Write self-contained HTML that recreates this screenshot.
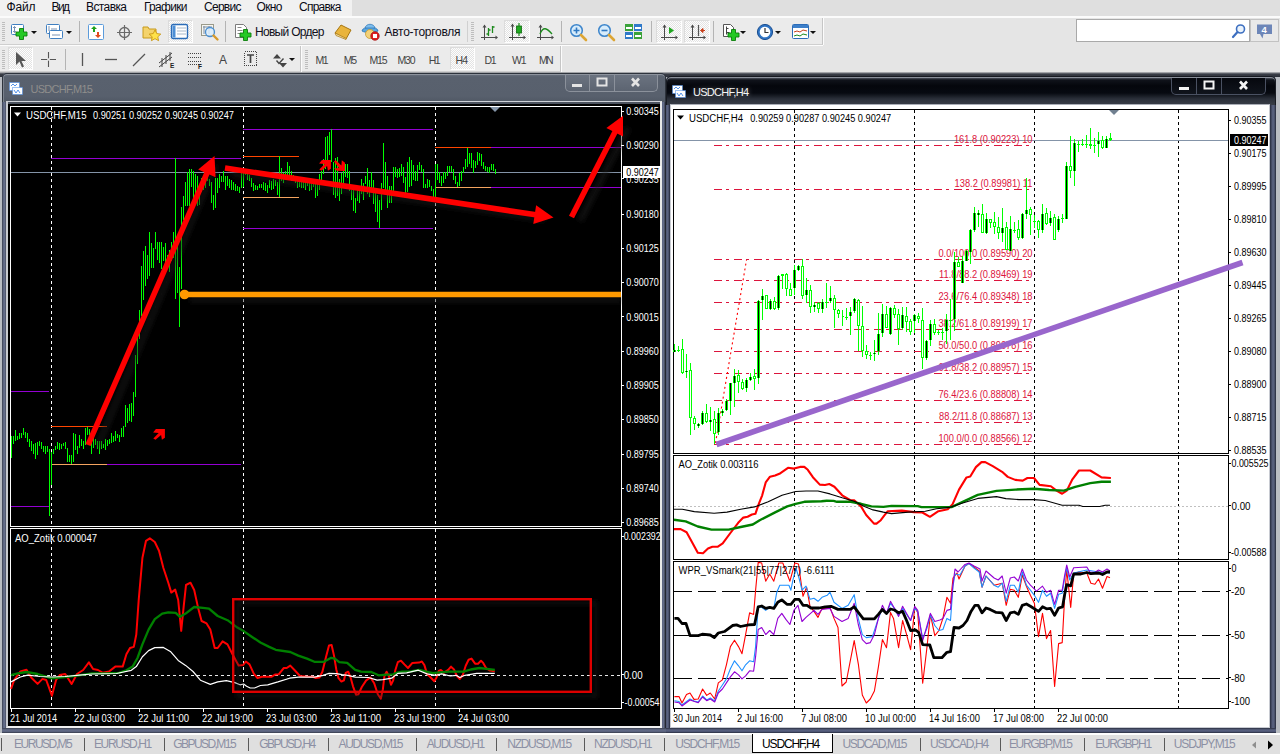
<!DOCTYPE html>
<html lang="ru"><head><meta charset="utf-8"><title>MetaTrader 4 - USDCHF,H4</title>
<style>
*{box-sizing:border-box;margin:0;padding:0}
html,body{width:1280px;height:754px;overflow:hidden;background:#ababab;font-family:"Liberation Sans",sans-serif;font-size:12px;color:#000}
#app{position:relative;width:1280px;height:754px;overflow:hidden;background:#b9bdc3}
.abs{position:absolute}
#menubar{position:absolute;left:0;top:0;width:1280px;height:18px;background:#dfdfdf;border-bottom:2px solid #fbfbfb}
#menubar span{position:absolute;top:0px;font-size:12px;line-height:15px;color:#0a0a14;white-space:nowrap}
#menubar .hl{position:absolute;left:0;top:0;width:352px;height:16px;background:#f1f1f1}
#tb1{position:absolute;left:0;top:18px;width:1280px;height:28px;background:#e5e5e5}
#tb2{position:absolute;left:0;top:46px;width:1280px;height:27px;background:#e5e5e5}
.tbseg{position:absolute;top:0;height:27px;background:#ebebeb;border-right:1px solid #c6c6c6;border-bottom:1px solid #cfcfcf;box-shadow:0 1px 0 #fcfcfc,1px 0 0 #fcfcfc}
.grip{position:absolute;width:3px;top:4px;height:19px;background:repeating-linear-gradient(#bdbdbd 0 1px,transparent 1px 2px)}
.sep{position:absolute;width:1px;top:3px;height:21px;background:#b4b4b4}
.ic{position:absolute;overflow:visible}
.pressed{position:absolute;background:repeating-conic-gradient(#fdfdfd 0 25%,#e3e3e3 0 50%) 0 0/2px 2px;border:1px solid #dcdcdc;border-right-color:#fff;border-bottom-color:#fff}
.tbtxt{position:absolute;font-size:12px;line-height:14px;color:#10101c;white-space:nowrap}
.tf{position:absolute;top:6.500px;font-size:10.500px;line-height:14px;color:#444;white-space:nowrap}
.dd{position:absolute;width:0;height:0;border-left:3px solid transparent;border-right:3px solid transparent;border-top:3px solid #111}
#search{position:absolute;left:1076px;top:19px;width:174px;height:23px;background:#fff;border:1px solid #a9a9a9}
#chat{position:absolute;left:1250px;top:19px;width:29px;height:23px;background:#e9e9e9;border:1px solid #c2c2c2}
/* MDI windows */
.win{position:absolute;border-radius:5px 5px 0 0}
.wtitle{position:absolute;left:0;top:0;right:0;height:29px;border-radius:5px 5px 0 0}
.wtxt{position:absolute;font-size:11px;line-height:14px;white-space:nowrap}
.wbtns{position:absolute;height:17px;border-radius:0 0 5px 5px}
.wbtns i{position:absolute;top:0;height:16px;width:1px}
#tabs{position:absolute;left:0;top:733px;width:1280px;height:21px;background:#dfdfdf;border-top:2px solid #fdfdfd}
#tabs span{position:absolute;top:2px;font-size:12px;line-height:15px;color:#8c90a4;white-space:nowrap}
#tabs i{position:absolute;top:3px;width:1px;height:13px;background:#5a5a5a}
#tabs .act{position:absolute;left:752px;top:-1px;width:81px;height:19px;background:#fff;border:1px solid #000;border-top:none}
svg text{font-family:"Liberation Sans",sans-serif}
</style></head>
<body><div id="app">
<div id="menubar"><div class="hl"></div><span style="left:6.5px;letter-spacing:-0.172px">Файл</span><span style="left:51.5px;letter-spacing:-1.609px">Вид</span><span style="left:86px;letter-spacing:-0.602px">Вставка</span><span style="left:144px;letter-spacing:-0.701px">Графики</span><span style="left:204px;letter-spacing:-0.719px">Сервис</span><span style="left:256.5px;letter-spacing:-0.63px">Окно</span><span style="left:299px;letter-spacing:-0.763px">Справка</span></div>
<div id="tb1"><div class="tbseg" style="left:0;width:823px"></div><div class="grip" style="left:2px"></div><svg class="ic" style="left:10px;top:5px" width="20" height="19" viewBox="0 0 20 19"><rect x="1.500" y="1.500" width="12" height="10" rx="1" fill="#fff" stroke="#3f7fc1"/><path d="M4.500 3.500v6M3 5l1.500-1.500 1.500 1.500M3 8l1.500 1.500 1.500-1.500" stroke="#7a93b3" fill="none"/><path d="M9.500 5.500h4v3.500h3.500v4h-3.500v3.500h-4v-3.500h-3.500v-4h3.500z" fill="#25c925" stroke="#0b7e0b" stroke-width=".9"/></svg><div class="dd" style="left:31px;top:13px"></div><svg class="ic" style="left:45px;top:5px" width="20" height="18" viewBox="0 0 20 18"><rect x="1.500" y="1.500" width="13" height="9" rx="1" fill="#fff" stroke="#3f7fc1"/><rect x="4.500" y="7.500" width="13" height="8" rx="1" fill="#fff" stroke="#3f7fc1"/><path d="M4 3v5M6 6h6M7 12h8" stroke="#7a93b3" fill="none"/></svg><div class="dd" style="left:66px;top:13px"></div><div class="sep" style="left:79px"></div><svg class="ic" style="left:88px;top:6px" width="16" height="16" viewBox="0 0 16 16"><rect x="0.500" y="0.500" width="15" height="15" rx="1" fill="#fff" stroke="#5b9bdb"/><path d="M6 2l3 3h-2v3h-2v-3h-2z" fill="#1da11d"/><path d="M10 14l-3-3h2v-3h2v3h2z" fill="#e24a1c"/></svg><svg class="ic" style="left:116px;top:6px" width="17" height="17" viewBox="0 0 17 17"><circle cx="8.500" cy="8.500" r="5" fill="none" stroke="#6a6a6a" stroke-width="1.300"/><path d="M8.500 1v15M1 8.500h15" stroke="#6a6a6a" stroke-width="1.200"/></svg><svg class="ic" style="left:142px;top:5px" width="20" height="18" viewBox="0 0 20 18"><path d="M1 4h5l1 2h7v9h-13z" fill="#f4d36b" stroke="#c79a1c"/><path d="M13 7l1.800 3.600 4 .5-3 2.700.8 3.900-3.600-2-3.600 2 .8-3.900-3-2.700 4-.5z" fill="#ffe24a" stroke="#c48f0a" stroke-width=".8"/></svg><div class="pressed" style="left:168px;top:2px;width:25px;height:23px"></div><svg class="ic" style="left:171px;top:6px" width="17" height="16" viewBox="0 0 17 16"><rect x="0.500" y="0.500" width="16" height="14" rx="1.500" fill="#fff" stroke="#2b6cb8" stroke-width="1.400"/><rect x="1.500" y="1.500" width="3" height="12" fill="#4d8fd6"/><path d="M6 4h9M6 7h9M6 10h9" stroke="#a9b8c9"/></svg><svg class="ic" style="left:200px;top:5px" width="20" height="18" viewBox="0 0 20 18"><rect x="1.500" y="1.500" width="12" height="11" fill="#f5f5f0" stroke="#9a9a8a"/><path d="M3 4h9M4 3v8M9 3v8" stroke="#7c8da3" fill="none"/><circle cx="10" cy="9" r="4.500" fill="#d9ecfb" fill-opacity=".85" stroke="#4b8fd0" stroke-width="1.300"/><path d="M13.500 12.500l4 4" stroke="#d79a2b" stroke-width="2.400" stroke-linecap="round"/></svg><div class="sep" style="left:225px"></div><svg class="ic" style="left:234px;top:5px" width="20" height="19" viewBox="0 0 20 19"><path d="M1.500 1.500h8l3 3v10h-11z" fill="#fff" stroke="#7b7b7b"/><path d="M3.500 4.500h4M3.500 7.500h5M3.500 10.500h3" stroke="#8a8a8a"/><path d="M9.500 6.500h4v3.500h3.500v4h-3.500v3.500h-4v-3.500h-3.500v-4h3.500z" fill="#25c925" stroke="#0b7e0b" stroke-width=".9"/></svg><span class="tbtxt" style="left:255px;top:7px;letter-spacing:-0.697px">Новый Ордер</span><svg class="ic" style="left:333px;top:6px" width="20" height="16" viewBox="0 0 20 16"><path d="M2 9l6-8 10 5-5 9z" fill="#e9b43c" stroke="#a77611"/><path d="M2 9l1 2.500 10 4 .3-1z" fill="#f7e3a3" stroke="#a77611" stroke-width=".7"/></svg><svg class="ic" style="left:361px;top:5px" width="20" height="18" viewBox="0 0 20 18"><path d="M1 8c0-5 16-5 16 0c-3 2-13 2-16 0z" fill="#5aa6e0" stroke="#2a73b6" stroke-width=".8"/><path d="M4 5c1-5 9-5 10 0z" fill="#7cbcec" stroke="#2a73b6" stroke-width=".7"/><circle cx="9" cy="11" r="4.500" fill="#f3d27a" stroke="#c99a2d" stroke-width=".8"/><circle cx="14" cy="13" r="4.200" fill="#e02020" stroke="#a50f0f" stroke-width=".8"/><rect x="12" y="11" width="4" height="4" fill="#fff"/></svg><span class="tbtxt" style="left:384.5px;top:7px;letter-spacing:-0.271px">Авто-торговля</span><div class="sep" style="left:467px;background:#d0d0d0"></div><div class="grip" style="left:471px"></div><svg class="ic" style="left:481px;top:6px" width="18" height="16" viewBox="0 0 18 16"><path d="M3.500 1v15M0 13.500h16" stroke="#4a4a4a" stroke-width="1" fill="none" shape-rendering="crispEdges"/><path d="M14.500 11.500l2.500 2-2.500 2zM1.500 3.500l2-3 2 3z" fill="#4a4a4a"/><path d="M7.500 4v8M5.500 10h2M7.500 6h2M11.500 2v7M11.500 3h2" stroke="#1d8a1d" stroke-width="1.300" fill="none"/></svg><div class="pressed" style="left:504px;top:2px;width:26px;height:23px"></div><svg class="ic" style="left:509px;top:5px" width="18" height="18" viewBox="0 0 18 18"><path d="M3.500 1v16M0 14.500h16" stroke="#4a4a4a" stroke-width="1" fill="none" shape-rendering="crispEdges"/><path d="M14.500 12.500l2.500 2-2.500 2zM1.500 3.500l2-3 2 3z" fill="#4a4a4a"/><path d="M10 0v13" stroke="#1d8a1d" stroke-width="1.200"/><rect x="7.500" y="3" width="5" height="7" fill="#21a821" stroke="#0d6d0d" stroke-width=".8"/></svg><svg class="ic" style="left:537px;top:6px" width="18" height="16" viewBox="0 0 18 16"><path d="M3.500 1v15M0 13.500h16" stroke="#4a4a4a" stroke-width="1" fill="none" shape-rendering="crispEdges"/><path d="M14.500 11.500l2.500 2-2.500 2zM1.500 3.500l2-3 2 3z" fill="#4a4a4a"/><path d="M3 10c3-8 7-6 12 0" stroke="#1d8a1d" stroke-width="1.300" fill="none"/></svg><div class="sep" style="left:561px"></div><svg class="ic" style="left:569px;top:5px" width="20" height="19" viewBox="0 0 20 19"><circle cx="7.500" cy="7.500" r="5.800" fill="#d7ecfb" stroke="#3d85cb" stroke-width="1.500"/><path d="M4.500 7.500h6M7.500 4.500v6" stroke="#2f78c2" stroke-width="1.600"/><path d="M12 12l5 5" stroke="#dca534" stroke-width="2.600" stroke-linecap="round"/></svg><svg class="ic" style="left:597px;top:5px" width="20" height="19" viewBox="0 0 20 19"><circle cx="7.500" cy="7.500" r="5.800" fill="#d7ecfb" stroke="#3d85cb" stroke-width="1.500"/><path d="M4.500 7.500h6" stroke="#2f78c2" stroke-width="1.600"/><path d="M12 12l5 5" stroke="#dca534" stroke-width="2.600" stroke-linecap="round"/></svg><svg class="ic" style="left:625px;top:6px" width="18" height="16" viewBox="0 0 18 16"><rect x="0" y="0" width="8" height="7" fill="#3aa23a"/><rect x="9" y="0" width="8" height="7" fill="#2f79c9"/><rect x="0" y="8" width="8" height="7" fill="#2f79c9"/><rect x="9" y="8" width="8" height="7" fill="#3aa23a"/><path d="M1 4h6M10 4h6M1 12h6M10 12h6" stroke="#fff" stroke-width="2"/></svg><div class="sep" style="left:651px"></div><div class="pressed" style="left:656px;top:2px;width:26px;height:23px"></div><svg class="ic" style="left:661px;top:6px" width="18" height="16" viewBox="0 0 18 16"><path d="M3.500 1v15M0 13.500h16" stroke="#4a4a4a" stroke-width="1" fill="none" shape-rendering="crispEdges"/><path d="M14.500 11.500l2.500 2-2.500 2zM1.500 3.500l2-3 2 3z" fill="#4a4a4a"/><path d="M8 3l5 3.500-5 3.500z" fill="#1fa51f"/></svg><div class="pressed" style="left:684px;top:2px;width:26px;height:23px"></div><svg class="ic" style="left:689px;top:6px" width="18" height="16" viewBox="0 0 18 16"><path d="M3.500 1v15M0 13.500h16" stroke="#4a4a4a" stroke-width="1" fill="none" shape-rendering="crispEdges"/><path d="M14.500 11.500l2.500 2-2.500 2zM1.500 3.500l2-3 2 3z" fill="#4a4a4a"/><path d="M9.500 1v11" stroke="#555" stroke-width="1.200"/><path d="M16 6.500h-4M14 4.500l-2.500 2 2.500 2z" stroke="#c8401c" fill="#c8401c" stroke-width="1"/></svg><div class="sep" style="left:713px"></div><svg class="ic" style="left:722px;top:5px" width="20" height="19" viewBox="0 0 20 19"><path d="M1.500 1.500h7l3 3v9h-10z" fill="#fff" stroke="#555"/><path d="M4.500 3.500v8M4.500 9.500h3M4.500 5.500h2" stroke="#444" fill="none"/><path d="M9.500 6.500h4v3.500h3.500v4h-3.500v3.500h-4v-3.500h-3.500v-4h3.500z" fill="#25c925" stroke="#0b7e0b" stroke-width=".9"/></svg><div class="dd" style="left:740px;top:13px"></div><svg class="ic" style="left:756px;top:5px" width="18" height="18" viewBox="0 0 18 18"><circle cx="9" cy="9" r="7.600" fill="#2f74c4" stroke="#1c4f91"/><circle cx="9" cy="9" r="5.300" fill="#fff"/><path d="M9 5v4.500h3.500" stroke="#333" stroke-width="1.200" fill="none"/></svg><div class="dd" style="left:775px;top:13px"></div><svg class="ic" style="left:792px;top:6px" width="18" height="16" viewBox="0 0 18 16"><rect x="0.500" y="0.500" width="16" height="14" rx="1" fill="#fff" stroke="#2b6cb8"/><rect x="1" y="1" width="15" height="3" fill="#3d7fc9"/><path d="M2 8l3-1 3 1 3-2 4 1" stroke="#c8401c" fill="none"/><path d="M2 12l3-1 3 1 3-2 4 1" stroke="#1d8a1d" fill="none"/></svg><div class="dd" style="left:810px;top:13px"></div></div><div id="search"><svg class="ic" style="left:154px;top:3px" width="16" height="16" viewBox="0 0 16 16"><circle cx="9.500" cy="6" r="4" fill="#eaf3fc" stroke="#3d6fc0" stroke-width="1.600"/><path d="M6.500 9l-4.500 5" stroke="#3d6fc0" stroke-width="2.200" stroke-linecap="round"/></svg></div><div id="chat"><svg class="ic" style="left:5px;top:4px" width="18" height="16" viewBox="0 0 18 16"><path d="M1 0.500h15v9.500h-8.500l-1 4.500-2.500-4.500h-3z" fill="#6d86b8"/><text x="5.500" y="8.500" font-size="9.500" font-weight="bold" fill="#fff">4</text></svg></div>
<div id="tb2"><div class="tbseg" style="left:0;width:301px;height:26px"></div><div class="tbseg" style="left:302px;width:259px;height:26px"></div><div class="grip" style="left:2px"></div><div class="pressed" style="left:8px;top:1px;width:25px;height:23px;"></div><svg class="ic" style="left:15px;top:5px" width="12" height="18" viewBox="0 0 12 18"><path d="M1 1v13l3.500-3.500 2.500 6 2-1-2.500-5.500h4.500z" fill="#555"/></svg><svg class="ic" style="left:40px;top:5px" width="18" height="18" viewBox="0 0 18 18"><path d="M8.500 1v15M1 8.500h15" stroke="#555" stroke-width="1.100"/><circle cx="8.500" cy="8.500" r="1.300" fill="#ebebeb"/></svg><div class="sep" style="left:65px"></div><svg class="ic" style="left:78px;top:5px" width="10" height="18" viewBox="0 0 10 18"><path d="M4.500 2v13" stroke="#555" stroke-width="1.300"/></svg><svg class="ic" style="left:104px;top:5px" width="16" height="18" viewBox="0 0 16 18"><path d="M1 8.500h12" stroke="#555" stroke-width="1.300"/></svg><svg class="ic" style="left:131px;top:5px" width="16" height="18" viewBox="0 0 16 18"><path d="M2 15l12-12" stroke="#555" stroke-width="1.300"/></svg><svg class="ic" style="left:158px;top:4px" width="20" height="20" viewBox="0 0 20 20"><path d="M1 13l13-10M1 17l13-10M4 8v9M8 5v9M12 2v9" stroke="#444" stroke-width="1" fill="none"/><text x="12" y="18" font-size="6.500" font-weight="bold" fill="#222">E</text></svg><svg class="ic" style="left:187px;top:4px" width="20" height="20" viewBox="0 0 20 20"><path d="M1 3.500h13M1 7.500h13M1 11.500h13M1 14.500h13" stroke="#444" stroke-width="1" stroke-dasharray="1 1" fill="none" shape-rendering="crispEdges"/><text x="11" y="18.500" font-size="6.500" font-weight="bold" fill="#222">F</text></svg><svg class="ic" style="left:218.5px;top:6.5px" width="12" height="16" viewBox="0 0 12 16"><text x="0" y="11" font-size="12" fill="#444">A</text></svg><svg class="ic" style="left:243px;top:4px" width="16" height="18" viewBox="0 0 16 18"><rect x="1.500" y="1.500" width="12" height="14" fill="none" stroke="#444" stroke-dasharray="1 1" shape-rendering="crispEdges"/><path d="M4 5h7M7.500 5v8" stroke="#444" stroke-width="1.700"/></svg><svg class="ic" style="left:271.5px;top:6.5px" width="16" height="16" viewBox="0 0 16 16"><path d="M5 1l4 4.500h-8zM11 14.500l-4-4.500h8z" fill="#444"/><path d="M4.500 7.500l2.500 3 4.500-5" stroke="#444" stroke-width="1.400" fill="none"/></svg><div class="dd" style="left:289px;top:12px"></div><div class="grip" style="left:305px"></div><div class="pressed" style="left:450px;top:1px;width:25px;height:23px"></div><span class="tf" style="left:315.5px;letter-spacing:-1.594px">M1</span><span class="tf" style="left:343.7px;letter-spacing:-1.294px">M5</span><span class="tf" style="left:369.5px;letter-spacing:-1.219px">M15</span><span class="tf" style="left:397.5px;letter-spacing:-1.219px">M30</span><span class="tf" style="left:428.7px;letter-spacing:-1.637px">H1</span><span class="tf" style="left:455.5px;letter-spacing:-0.738px">H4</span><span class="tf" style="left:484.4px;letter-spacing:-1.137px">D1</span><span class="tf" style="left:511.9px;letter-spacing:-1.15px">W1</span><span class="tf" style="left:539px;letter-spacing:-1.844px">MN</span></div>
<div class="abs" style="left:0;top:72px;width:1280px;height:5px;background:linear-gradient(#c9c9c9,#7d8087 1px,#3a3e47 2px,#2b2f38 5px)"></div>
<div class="win" style="left:2px;top:73px;width:664px;height:660px;background:linear-gradient(90deg,#2f3442 0,#59627d 1px,#6a7390 3px,#3a4050 4px,#3a4050 659px,#5a6380 660px,#68718d 662px,#2c303c 663px,#1c1f28 664px)"><div class="wtitle" style="background:linear-gradient(#6b7380 0,#59616e 3px,#58606d 22px,#4f5763 29px);border:1px solid #2e343d;border-bottom:none;box-shadow:inset 0 1px 0 #8d939d,inset 1px 0 0 #7b828d"></div><svg class="ic" style="left:6px;top:8px" width="16" height="16" viewBox="0 0 16 16"><rect x="1.500" y="1.500" width="10" height="8" fill="#fff" stroke="#3f86e8" stroke-dasharray="1 1"/><rect x="4.500" y="6.500" width="10" height="7" fill="#fff" stroke="#3f86e8" stroke-dasharray="1 1"/><path d="M3 5l2-2 2 2 2-2M6 9l2 3 2-3 2 3" stroke="#3f86e8" fill="none" stroke-width=".9"/></svg><span class="wtxt" style="left:28.500px;top:9px;color:#8f8e8c;letter-spacing:-0.731px">USDCHF,M15</span><div class="wbtns" style="left:563px;top:2px;width:93px;background:linear-gradient(#6b7380,#5c6471);border:1px solid #8b919b;border-top:none"><i style="left:23px;background:#8b919b"></i><i style="left:48px;background:#8b919b"></i></div><svg class="ic" style="left:563px;top:2px" width="93" height="17"><rect x="7" y="9" width="10" height="3" fill="#e4e4e4"/><rect x="32.500" y="3.500" width="9" height="7" fill="none" stroke="#e4e4e4" stroke-width="2"/><path d="M67 3.500l7 7.500M74 3.500l-7 7.500" stroke="#e4e4e4" stroke-width="2.600"/></svg><div class="abs" style="left:4px;top:28px;width:656px;height:627px;background:#000;border:2px solid #c9cbd0;border-top:1px solid #cdd0d6;border-right-color:#e9e9e9;border-bottom-color:#f1f1f1;box-shadow:inset 0 2px 0 #4c535f"></div><div class="abs" style="left:0;top:655px;width:664px;height:5px;background:linear-gradient(#3a4050,#636c88 2px,#575f7a 4px,#2c303c)"></div></div>
<div class="win" style="left:666px;top:76px;width:610px;height:657px;background:linear-gradient(90deg,#4e5672 0,#5d6684 2px,#3a4058 3px,#23283a 4px,#23283a 604px,#3a4058 605px,#5d6684 607px,#434a63 609px,#1e2230 610px)"><div class="wtitle" style="background:linear-gradient(#666c78 0,#10131b 3px,#04060c 9px,#070a11 16px,#2b303a 22px,#3a3f49 29px);border:1px solid #181b22;border-bottom:none;box-shadow:inset 0 1px 0 #8a8f99"></div><svg class="ic" style="left:5px;top:8px" width="16" height="16" viewBox="0 0 16 16"><rect x="1.500" y="1.500" width="10" height="8" fill="#fff" stroke="#3f86e8" stroke-dasharray="1 1"/><rect x="4.500" y="6.500" width="10" height="7" fill="#fff" stroke="#3f86e8" stroke-dasharray="1 1"/><path d="M3 5l2-2 2 2 2-2M6 9l2 3 2-3 2 3" stroke="#3f86e8" fill="none" stroke-width=".9"/></svg><span class="wtxt" style="left:27px;top:9px;color:#f4f4f4;text-shadow:0 0 5px rgba(255,255,255,.45);letter-spacing:-0.717px">USDCHF,H4</span><div class="wbtns" style="left:505px;top:2px;width:95px;background:linear-gradient(#06080e,#10141c);border:1px solid #4a5162;border-top:none"><i style="left:24px;background:#4a5162"></i><i style="left:49px;background:#4a5162"></i></div><svg class="ic" style="left:505px;top:2px" width="95" height="17"><rect x="8" y="9" width="10" height="3" fill="#f4f4f4"/><rect x="33.500" y="3.500" width="9" height="7" fill="none" stroke="#f4f4f4" stroke-width="2"/><path d="M69 3.500l7 7.500M76 3.500l-7 7.500" stroke="#f4f4f4" stroke-width="2.600"/></svg><div class="abs" style="left:4px;top:28px;width:600px;height:624px;background:#fff;border:1px solid #c8cbd2;border-top-color:#a9adb6"></div><div class="abs" style="left:0;top:652px;width:610px;height:5px;background:linear-gradient(#2a2f40,#5a6382 2px,#4a5270 4px,#1e2230)"></div></div>
<svg class="abs" style="left:0;top:0" width="666" height="734" viewBox="0 0 666 734" shape-rendering="crispEdges">
<rect x="10.500" y="106.500" width="611" height="420" fill="none" stroke="#ffffff"/>
<rect x="10.500" y="528.500" width="611" height="180" fill="none" stroke="#ffffff"/>
<path d="M51.5 107V526M51.5 529V708" stroke="#ffffff" stroke-dasharray="3 3" fill="none"/>
<path d="M243.5 107V526M243.5 529V708" stroke="#ffffff" stroke-dasharray="3 3" fill="none"/>
<path d="M435.5 107V526M435.5 529V708" stroke="#ffffff" stroke-dasharray="3 3" fill="none"/>
<path d="M11 172.500H621" stroke="#8494a8"/>
<path d="M11 391.5H49" stroke="#9400d3"/>
<path d="M11 506.5H49" stroke="#9400d3"/>
<path d="M51 158.5H241" stroke="#9400d3"/>
<path d="M51 426.5H107" stroke="#ff4500"/>
<path d="M51 464.5H107" stroke="#f4a460"/>
<path d="M107 464.5H241" stroke="#9400d3"/>
<path d="M243 129.5H433" stroke="#9400d3"/>
<path d="M243 228.5H433" stroke="#9400d3"/>
<path d="M243 156.5H299" stroke="#ff4500"/>
<path d="M243 197.5H299" stroke="#f4a460"/>
<path d="M435 147.5H491" stroke="#ff4500"/>
<path d="M491 147.5H621" stroke="#9400d3"/>
<path d="M435 187.5H491" stroke="#f4a460"/>
<path d="M491 187.5H621" stroke="#9400d3"/>
<path d="M11.5 436V458M13.5 436V444M15.5 430V441M17.5 436V440M19.5 433V439M21.5 433V438M23.5 428V435M25.5 432V438M27.5 433V442M29.5 439V447M31.5 441V451M33.5 444V454M35.5 443V459M37.5 442V455M39.5 441V446M41.5 442V449M43.5 446V452M45.5 446V454M47.5 446V452M49.5 449V516M51.5 452V485M53.5 449V454M55.5 446V450M57.5 442V449M59.5 443V450M61.5 444V449M63.5 443V446M65.5 442V449M67.5 448V462M69.5 455V462M71.5 455V464M73.5 433V462M75.5 434V450M77.5 446V454M79.5 435V448M81.5 439V446M83.5 441V449M85.5 428V445M87.5 427V435M89.5 429V435M91.5 438V454M93.5 437V448M95.5 439V445M97.5 441V449M99.5 441V454M101.5 441V449M103.5 444V448M105.5 439V450M107.5 440V446M109.5 439V444M111.5 433V443M113.5 436V442M115.5 431V441M117.5 434V438M119.5 435V442M121.5 428V437M123.5 426V437M125.5 405V427M127.5 408V423M129.5 404V421M131.5 403V422M133.5 392V416M135.5 355V397M137.5 336V364M139.5 310V339M141.5 266V316M143.5 251V300M145.5 246V286M147.5 255V279M149.5 232V276M151.5 243V268M153.5 248V268M155.5 232V249M157.5 242V260M159.5 242V263M161.5 242V269M163.5 247V261M165.5 243V262M167.5 255V265M169.5 250V272M171.5 242V261M173.5 232V258M175.5 158V299M177.5 244V293M179.5 267V327M181.5 207V289M183.5 196V220M185.5 182V206M187.5 172V206M189.5 169V206M191.5 169V187M193.5 171V198M195.5 174V195M197.5 176V206M199.5 185V205M201.5 178V192M203.5 175V190M205.5 175V188M207.5 172V181M209.5 179V186M211.5 182V203M213.5 195V210M215.5 178V208M217.5 178V193M219.5 174V188M221.5 176V182M223.5 171V182M225.5 176V190M227.5 176V186M229.5 179V188M231.5 180V190M233.5 182V190M235.5 184V191M237.5 186V191M239.5 187V193M241.5 172V188M243.5 172V187M245.5 173V175M247.5 173V180M249.5 175V181M251.5 178V187M253.5 183V191M255.5 185V190M257.5 186V190M259.5 184V188M261.5 184V188M263.5 182V190M265.5 183V191M267.5 185V193M269.5 180V188M271.5 181V190M273.5 179V189M275.5 180V186M277.5 182V195M279.5 156V197M281.5 168V181M283.5 173V183M285.5 171V180M287.5 162V176M289.5 166V176M291.5 171V181M293.5 175V180M295.5 177V183M297.5 181V188M299.5 181V187M301.5 182V188M303.5 182V188M305.5 182V190M307.5 182V186M309.5 182V191M311.5 183V190M313.5 183V187M315.5 183V198M317.5 179V196M319.5 174V190M321.5 171V181M323.5 159V174M325.5 137V169M327.5 136V165M329.5 132V155M331.5 129V162M333.5 162V195M335.5 158V198M337.5 157V196M339.5 179V201M341.5 173V194M343.5 171V184M345.5 164V177M347.5 164V178M349.5 171V191M351.5 190V200M353.5 190V211M355.5 198V213M357.5 190V201M359.5 190V203M361.5 179V194M363.5 183V200M365.5 176V184M367.5 168V194M369.5 180V197M371.5 172V188M373.5 180V204M375.5 193V212M377.5 195V222M379.5 200V228M381.5 183V210M383.5 143V188M385.5 162V190M387.5 176V208M389.5 186V203M391.5 186V203M393.5 167V191M395.5 167V177M397.5 169V178M399.5 168V177M401.5 164V176M403.5 167V183M405.5 177V193M407.5 162V192M409.5 157V187M411.5 160V186M413.5 165V180M415.5 171V181M417.5 165V181M419.5 162V170M421.5 165V172M423.5 169V188M425.5 184V188M427.5 179V188M429.5 180V187M431.5 186V191M433.5 189V198M435.5 164V198M437.5 164V180M439.5 172V183M441.5 176V186M443.5 172V183M445.5 172V179M447.5 166V176M449.5 166V172M451.5 166V172M453.5 169V180M455.5 176V184M457.5 182V187M459.5 173V186M461.5 171V181M463.5 167V173M465.5 159V169M467.5 148V167M469.5 153V164M471.5 153V168M473.5 160V173M475.5 161V168M477.5 152V165M479.5 153V161M481.5 154V166M483.5 162V169M485.5 166V171M487.5 167V172M489.5 167V173M491.5 164V170M493.5 164V171M495.5 169V174" stroke="#00ff00" fill="none"/>
<polygon points="319.100,163.500 321.900,160.100 330.900,159.900 330.900,168.700 327.900,170.700 327.100,165.900 321.500,170.700 319.300,169.500 324.700,163.900" fill="#ff0000" shape-rendering="auto"/>
<polygon points="333.900,161.500 335.900,160.300 341.400,165.500 341.800,160.300 345,162.700 345,170.900 337,170.700 333.900,168.500 339,167.900" fill="#ff0000" shape-rendering="auto"/>
<polygon points="153.100,432.500 155.900,429.100 164.900,428.900 164.900,437.700 161.900,439.700 161.100,434.900 155.500,439.700 153.300,438.500 158.700,432.900" fill="#ff0000" shape-rendering="auto"/>
<path d="M490 107h10l-5 5z" fill="#8494a8" shape-rendering="auto"/>
<path d="M11 675.500H621" stroke="#e8e8e8" stroke-dasharray="3 3"/>
<g shape-rendering="auto" fill="none" stroke-linejoin="round">
<polyline points="11,688.800 14.200,680 20.300,671.500 26.500,669.800 31.400,677.700 37.600,683.900 42.500,678.900 46.200,680 51.900,695.700 56.100,680 59.800,675 65.200,674 71.600,683.900 77,674 83.200,670 88.900,662.400 93.100,669 98,670 103,672.800 109,671.500 115.300,666.600 122.700,666.600 126.400,654.300 130,648 133.800,646.900 136.300,634.500 138.700,600 142.400,558 146,540.800 149.800,538.300 154.800,542 159,550.700 163.400,568 168.300,582.700 171.300,592.600 175.200,589.600 178.200,600 181.200,630.800 183.600,607.400 186,585 190.500,582.700 194.200,590 198,607.400 201.600,621 206.600,623.400 210.300,629.600 214.700,648 217.700,648 222.600,641.400 227.500,644.400 232.500,654.300 238.600,665.400 243.200,665 245.800,661.500 249.500,664.400 253.900,673.900 257.500,678 261.900,676.800 271.400,676.800 275,674.600 278.700,674.300 283.800,668 286.700,668 290.300,665.600 295.400,671 300,676 305.600,676.500 312.900,676.800 315.800,678 319.500,677.500 322.400,671.700 326,657 329,645.400 331.600,645 334,655.600 336.300,669.500 338.500,678.200 341.400,681.600 343.900,680.400 345.700,673 348.200,671.700 350.600,677.500 353,686.300 356,694.700 358.400,694.300 361.800,687 366.200,680.400 370.500,677.500 374.200,683.300 377.800,694.300 380.800,698.700 382.900,689.200 384.400,676 386.600,671.700 388.800,676 391,684.800 393.200,680.400 395.300,670.200 397.800,662.200 401,660.700 404.400,664.400 408,668 412.400,662.900 419,662.600 421.900,661.500 424.400,665.100 427,673.900 430.700,677.500 434.300,681.200 436.500,677.500 438.700,671 440.900,669.900 443.800,672.800 448.200,669.900 451,666.600 454,669.500 456.900,676 459.800,679 462.700,675.300 465.700,665.800 468.600,659.700 471.500,658.600 475.100,663.700 478,663.700 481,660.700 483.200,662.900 486,668 489.700,670.500 494.800,671.200" stroke="#ff0000" stroke-width="2"/>
<polyline points="11,675.200 17.900,673.300 26.500,672 37.600,674 51.900,678.400 65.200,677 77,675.700 91.900,673.300 106.700,673.300 119,672.800 126.400,670.300 132.600,666.600 137.500,658 142.400,644.400 148.600,629.600 154.800,619.200 162.200,613.600 168.300,612.300 175.700,612.800 180,616.800 185.600,613.600 194.200,607 202.900,607.900 209,608.600 217.700,616 227.500,620.200 237.400,627.600 244.400,631.600 251.700,636.700 260.400,642.500 269.200,646.900 275.700,649.800 290.300,652 298.300,655.600 307,658.600 314.400,661.800 323.900,661.800 331.200,657.800 334.800,658.600 339.200,662.200 347.200,662.900 355.200,669.900 361,671.700 371.300,672 378.600,675.300 385.900,674.600 393.200,674.300 396.400,672.800 402.200,671.700 411,671.400 419,669.900 425.500,671.400 432.800,673.100 440.100,672.400 448.900,671.700 463.500,671.700 470.800,669.500 479.500,668 486.800,668.800 494.800,669.900" stroke="#008000" stroke-width="2.300"/>
<polyline points="11,681.900 20.300,677 27.700,675.200 40,676.500 51.900,677 65.200,676.500 79.500,675.200 91.900,674 116.500,673.500 131.300,670.300 136.300,666.600 142.400,656.700 148.600,650.600 154.800,647.600 163.400,647.400 170.800,651.800 178.200,660.400 185.600,665.400 193,671.500 200.400,680.200 210.300,684.400 217.700,681.900 226.300,680.700 234.900,682.600 240,684.800 243.600,684 246.600,686.300 250.200,688 254.600,688 260.400,685.500 267.700,684.800 277.900,681.900 289.600,678.200 298.300,677.200 314.400,677.200 323.100,675.300 329,673.400 336.300,673.600 342.100,674.600 347.900,675.300 355.200,677.200 368.400,677.500 377.100,680.100 382.900,679.700 391.700,678.200 397.800,673.400 406.600,672.800 418.300,670.200 427,673.900 435.800,675.300 441.600,673.900 450.300,676 456.200,675.300 459.800,677.500 464.900,675.300 476.600,673.400 494.800,673.400" stroke="#ffffff" stroke-width="1.200"/>
</g>
<g shape-rendering="auto">
<g opacity=".55" filter="url(#blurL)" stroke="#1a1a1a" fill="#1a1a1a"><line x1="97" y1="448" x2="215" y2="165" stroke-width="7"/><line x1="232" y1="173" x2="545" y2="219" stroke-width="7"/><line x1="580" y1="221" x2="628" y2="128" stroke-width="7"/><line x1="190" y1="300" x2="621" y2="300" stroke-width="6"/><rect x="238" y="603" width="358" height="93" fill="none" stroke-width="4"/></g>
<defs><filter id="blurL" x="-20%" y="-20%" width="140%" height="140%"><feGaussianBlur stdDeviation="2.500"/></filter></defs>
<path d="M184.500 294.500H621" stroke="#ff9900" stroke-width="5.400"/><circle cx="184.500" cy="294.500" r="4.800" fill="#ff9900"/>
<rect x="233.200" y="599.200" width="357.600" height="92.600" fill="none" stroke="#de0000" stroke-width="2.400"/>
<line x1="88" y1="445" x2="207.282" y2="172.490" stroke="#ff0000" stroke-width="5.6"/><polygon points="214.500,156 215.584,177.215 198.178,169.596" fill="#ff0000"/>
<line x1="225" y1="168.100" x2="535.699" y2="214.729" stroke="#ff0000" stroke-width="5.6"/><polygon points="553.500,217.400 533.300,223.975 536.120,205.185" fill="#ff0000"/>
<g clip-path="url(#clipA3)"><line x1="571.500" y1="217" x2="615.293" y2="131.520" stroke="#ff0000" stroke-width="5.6"/><polygon points="623.500,115.500 623.292,136.742 606.382,128.078" fill="#ff0000"/></g><defs><clipPath id="clipA3"><rect x="500" y="100" width="123" height="130"/></clipPath></defs>
</g>
<g fill="#fff" font-size="10" shape-rendering="auto">
<path d="M621 111.5h3" stroke="#fff" shape-rendering="crispEdges"/>
<text x="626.200" y="115" textLength="32.500" lengthAdjust="spacingAndGlyphs">0.90345</text>
<path d="M621 145.5h3" stroke="#fff" shape-rendering="crispEdges"/>
<text x="626.200" y="149" textLength="32.500" lengthAdjust="spacingAndGlyphs">0.90290</text>
<path d="M621 178.5h3" stroke="#fff" shape-rendering="crispEdges"/>
<text x="626.200" y="182.500" textLength="32.500" lengthAdjust="spacingAndGlyphs">0.90235</text>
<path d="M621 214.5h3" stroke="#fff" shape-rendering="crispEdges"/>
<text x="626.200" y="218" textLength="32.500" lengthAdjust="spacingAndGlyphs">0.90180</text>
<path d="M621 248.5h3" stroke="#fff" shape-rendering="crispEdges"/>
<text x="626.200" y="252" textLength="32.500" lengthAdjust="spacingAndGlyphs">0.90125</text>
<path d="M621 282.5h3" stroke="#fff" shape-rendering="crispEdges"/>
<text x="626.200" y="286" textLength="32.500" lengthAdjust="spacingAndGlyphs">0.90070</text>
<path d="M621 316.5h3" stroke="#fff" shape-rendering="crispEdges"/>
<text x="626.200" y="320.500" textLength="32.500" lengthAdjust="spacingAndGlyphs">0.90015</text>
<path d="M621 351.5h3" stroke="#fff" shape-rendering="crispEdges"/>
<text x="626.200" y="355" textLength="32.500" lengthAdjust="spacingAndGlyphs">0.89960</text>
<path d="M621 385.5h3" stroke="#fff" shape-rendering="crispEdges"/>
<text x="626.200" y="389" textLength="32.500" lengthAdjust="spacingAndGlyphs">0.89905</text>
<path d="M621 419.5h3" stroke="#fff" shape-rendering="crispEdges"/>
<text x="626.200" y="423" textLength="32.500" lengthAdjust="spacingAndGlyphs">0.89850</text>
<path d="M621 454.5h3" stroke="#fff" shape-rendering="crispEdges"/>
<text x="626.200" y="458" textLength="32.500" lengthAdjust="spacingAndGlyphs">0.89795</text>
<path d="M621 488.5h3" stroke="#fff" shape-rendering="crispEdges"/>
<text x="626.200" y="492" textLength="32.500" lengthAdjust="spacingAndGlyphs">0.89740</text>
<path d="M621 522.5h3" stroke="#fff" shape-rendering="crispEdges"/>
<text x="626.200" y="526" textLength="32.500" lengthAdjust="spacingAndGlyphs">0.89685</text>
<rect x="623" y="166" width="38" height="12" fill="#fff"/><text x="626.200" y="176" textLength="32.500" lengthAdjust="spacingAndGlyphs" fill="#000">0.90247</text>
<path d="M621 536.5h3" stroke="#fff" shape-rendering="crispEdges"/>
<text x="623.7" y="540" textLength="37" lengthAdjust="spacingAndGlyphs">0.002392</text>
<path d="M621 674.5h3" stroke="#fff" shape-rendering="crispEdges"/>
<text x="623.7" y="678.500" textLength="19" lengthAdjust="spacingAndGlyphs">0.00</text>
<path d="M621 702.5h3" stroke="#fff" shape-rendering="crispEdges"/>
<text x="624.5" y="706" textLength="35" lengthAdjust="spacingAndGlyphs">-0.00054</text>
<path d="M14 112.500h7l-3.500 4z" fill="#fff"/>
<text x="26" y="118.500" textLength="60.500" lengthAdjust="spacingAndGlyphs">USDCHF,M15</text><text x="93" y="118.500" textLength="141" lengthAdjust="spacingAndGlyphs">0.90251 0.90252 0.90245 0.90247</text>
<text x="15" y="541.500" textLength="82" lengthAdjust="spacingAndGlyphs">AO_Zotik 0.000047</text>
<path d="M11.5 709v3" stroke="#fff" shape-rendering="crispEdges"/>
<text x="10" y="721.500" textLength="47" lengthAdjust="spacingAndGlyphs">21 Jul 2014</text>
<path d="M75.5 709v3" stroke="#fff" shape-rendering="crispEdges"/>
<text x="74" y="721.500" textLength="51" lengthAdjust="spacingAndGlyphs">22 Jul 03:00</text>
<path d="M139.5 709v3" stroke="#fff" shape-rendering="crispEdges"/>
<text x="138" y="721.500" textLength="51" lengthAdjust="spacingAndGlyphs">22 Jul 11:00</text>
<path d="M203.5 709v3" stroke="#fff" shape-rendering="crispEdges"/>
<text x="202" y="721.500" textLength="51" lengthAdjust="spacingAndGlyphs">22 Jul 19:00</text>
<path d="M267.5 709v3" stroke="#fff" shape-rendering="crispEdges"/>
<text x="266" y="721.500" textLength="51" lengthAdjust="spacingAndGlyphs">23 Jul 03:00</text>
<path d="M331.5 709v3" stroke="#fff" shape-rendering="crispEdges"/>
<text x="330" y="721.500" textLength="51" lengthAdjust="spacingAndGlyphs">23 Jul 11:00</text>
<path d="M395.5 709v3" stroke="#fff" shape-rendering="crispEdges"/>
<text x="394" y="721.500" textLength="51" lengthAdjust="spacingAndGlyphs">23 Jul 19:00</text>
<path d="M459.5 709v3" stroke="#fff" shape-rendering="crispEdges"/>
<text x="458" y="721.500" textLength="51" lengthAdjust="spacingAndGlyphs">24 Jul 03:00</text>
</g>
</svg>
<svg class="abs" style="left:666px;top:0" width="614" height="734" viewBox="666 0 614 734" shape-rendering="crispEdges">
<rect x="673.500" y="109.500" width="555" height="344" fill="none" stroke="#000"/>
<rect x="673.500" y="455.500" width="555" height="104" fill="none" stroke="#000"/>
<rect x="673.500" y="561.500" width="555" height="147" fill="none" stroke="#000"/>
<path d="M794.5 110V453M794.5 456V559M794.5 562V708" stroke="#000" stroke-dasharray="3 3" fill="none"/>
<path d="M914.5 110V453M914.5 456V559M914.5 562V708" stroke="#000" stroke-dasharray="3 3" fill="none"/>
<path d="M1034.5 110V453M1034.5 456V559M1034.5 562V708" stroke="#000" stroke-dasharray="3 3" fill="none"/>
<path d="M1178.5 110V453M1178.5 456V559M1178.5 562V708" stroke="#000" stroke-dasharray="3 3" fill="none"/>
<path d="M674 140.500H1228" stroke="#8494a8"/>
<path d="M714 145.5H1033" stroke="#dc143c" stroke-dasharray="8 4 3 5"/>
<path d="M714 189.5H1033" stroke="#dc143c" stroke-dasharray="8 4 3 5"/>
<path d="M714 259.5H1033" stroke="#dc143c" stroke-dasharray="8 4 3 5"/>
<path d="M714 280.5H1033" stroke="#dc143c" stroke-dasharray="8 4 3 5"/>
<path d="M714 302.5H1033" stroke="#dc143c" stroke-dasharray="8 4 3 5"/>
<path d="M714 329.5H1033" stroke="#dc143c" stroke-dasharray="8 4 3 5"/>
<path d="M714 351.5H1033" stroke="#dc143c" stroke-dasharray="8 4 3 5"/>
<path d="M714 373.5H1033" stroke="#dc143c" stroke-dasharray="8 4 3 5"/>
<path d="M714 400.5H1033" stroke="#dc143c" stroke-dasharray="8 4 3 5"/>
<path d="M714 422.5H1033" stroke="#dc143c" stroke-dasharray="8 4 3 5"/>
<path d="M714 444.5H1033" stroke="#dc143c" stroke-dasharray="8 4 3 5"/>
<path d="M715.500 443L746.500 260" stroke="#ff0000" stroke-dasharray="2 3" shape-rendering="auto" stroke-width="1.100"/>
<g fill="#dc143c" font-size="10" shape-rendering="auto" text-anchor="end">
<text x="1032.500" y="142.700" textLength="78.600" lengthAdjust="spacingAndGlyphs">161.8 (0.90223) 10</text>
<text x="1032.500" y="186.700" textLength="77.900" lengthAdjust="spacingAndGlyphs">138.2 (0.89981) 11</text>
<text x="1032.500" y="256.700" textLength="94.100" lengthAdjust="spacingAndGlyphs">0.0/100.0 (0.89590) 20</text>
<text x="1032.500" y="277.700" textLength="93.400" lengthAdjust="spacingAndGlyphs">11.8/88.2 (0.89469) 19</text>
<text x="1032.500" y="299.700" textLength="94.100" lengthAdjust="spacingAndGlyphs">23.6/76.4 (0.89348) 18</text>
<text x="1032.500" y="326.700" textLength="94.100" lengthAdjust="spacingAndGlyphs">38.2/61.8 (0.89199) 17</text>
<text x="1032.500" y="348.700" textLength="94.100" lengthAdjust="spacingAndGlyphs">50.0/50.0 (0.89078) 16</text>
<text x="1032.500" y="370.700" textLength="94.100" lengthAdjust="spacingAndGlyphs">61.8/38.2 (0.88957) 15</text>
<text x="1032.500" y="397.700" textLength="94.100" lengthAdjust="spacingAndGlyphs">76.4/23.6 (0.88808) 14</text>
<text x="1032.500" y="419.700" textLength="93.400" lengthAdjust="spacingAndGlyphs">88.2/11.8 (0.88687) 13</text>
<text x="1032.500" y="441.700" textLength="94.100" lengthAdjust="spacingAndGlyphs">100.0/0.0 (0.88566) 12</text>
</g>
<path d="M674.5 344V352M678.5 346V352M682.5 339V374M686.5 354V378M690.5 363V435M694.5 416V430M698.5 423V428M702.5 411V425M706.5 404V423M710.5 407V431M714.5 411V444M718.5 408V435M722.5 409V416M726.5 399V411M730.5 383V415M734.5 369V407M738.5 370V393M742.5 379V390M746.5 378V392M750.5 373V381M754.5 369V390M758.5 300V384M762.5 289V320M766.5 295V309M770.5 299V310M774.5 297V310M778.5 275V310M782.5 274V289M786.5 273V296M790.5 283V296M794.5 265V295M798.5 265V271M802.5 259V299M806.5 278V303M810.5 285V313M814.5 302V312M818.5 302V313M822.5 299V313M826.5 283V308M830.5 286V303M834.5 295V328M838.5 309V318M842.5 310V326M846.5 308V320M850.5 307V335M854.5 298V313M858.5 299V351M862.5 306V357M866.5 345V359M870.5 352V360M874.5 340V361M878.5 313V355M882.5 304V337M886.5 306V328M890.5 307V335M894.5 305V318M898.5 309V345M902.5 307V330M906.5 307V332M910.5 319V335M914.5 314V333M918.5 313V323M922.5 308V369M926.5 340V360M930.5 320V346M934.5 319V335M938.5 330V335M942.5 328V340M946.5 314V344M950.5 299V340M954.5 252V331M958.5 257V267M962.5 256V283M966.5 250V261M970.5 229V264M974.5 207V232M978.5 210V227M982.5 204V233M986.5 213V234M990.5 219V228M994.5 212V234M998.5 217V239M1002.5 208V242M1006.5 222V250M1010.5 216V251M1014.5 222V233M1018.5 220V240M1022.5 213V239M1026.5 178V219M1030.5 207V235M1034.5 215V228M1038.5 220V238M1042.5 204V233M1046.5 208V225M1050.5 211V226M1054.5 214V240M1058.5 216V232M1062.5 214V223M1066.5 162V219M1070.5 136V178M1074.5 139V186M1078.5 141V152M1082.5 139V146M1086.5 135V148M1090.5 128V149M1094.5 138V153M1098.5 132V157M1102.5 136V149M1106.5 136V148M1110.5 133V141" stroke="#00ff00" fill="none"/>
<path d="M681 349h3v24h-3zM689 370h3v48h-3zM693 418h3v6h-3zM705 413h3v9h-3zM713 419h3v15h-3zM737 375h3v7h-3zM741 382h3v7h-3zM753 376h3v3h-3zM765 295h3v14h-3zM773 301h3v8h-3zM781 274h3v2h-3zM785 274h3v15h-3zM789 289h3v7h-3zM801 266h3v30h-3zM809 290h3v17h-3zM817 303h3v6h-3zM833 298h3v12h-3zM837 310h3v4h-3zM841 316h3v1h-3zM857 300h3v26h-3zM861 326h3v25h-3zM865 351h3v4h-3zM885 314h3v14h-3zM893 308h3v7h-3zM897 314h3v15h-3zM905 316h3v6h-3zM909 321h3v11h-3zM917 316h3v3h-3zM921 320h3v38h-3zM933 324h3v9h-3zM957 262h3v5h-3zM981 214h3v19h-3zM989 219h3v4h-3zM993 222h3v5h-3zM997 227h3v6h-3zM1005 227h3v23h-3zM1017 229h3v9h-3zM1029 209h3v6h-3zM1037 221h3v9h-3zM1045 213h3v11h-3zM1053 217h3v23h-3zM1069 166h3v5h-3zM1089 144h3v2h-3zM1101 140h3v8h-3zM1109 138h3v2h-3z" fill="#fff" stroke="none"/>
<path d="M673 350h3v2h-3zM685 371h3v1h-3zM697 424h3v2h-3zM701 413h3v11h-3zM709 420h3v2h-3zM717 413h3v19h-3zM721 411h3v2h-3zM725 401h3v9h-3zM729 383h3v18h-3zM733 376h3v7h-3zM745 380h3v8h-3zM749 377h3v3h-3zM757 301h3v77h-3zM761 296h3v4h-3zM769 301h3v8h-3zM777 276h3v32h-3zM793 270h3v18h-3zM797 266h3v4h-3zM805 290h3v5h-3zM813 305h3v2h-3zM821 302h3v7h-3zM829 298h3v3h-3zM849 312h3v4h-3zM853 299h3v12h-3zM873 353h3v1h-3zM877 334h3v17h-3zM881 314h3v19h-3zM889 308h3v26h-3zM901 315h3v13h-3zM913 315h3v6h-3zM925 341h3v17h-3zM929 324h3v16h-3zM945 320h3v11h-3zM953 262h3v57h-3zM961 261h3v22h-3zM965 251h3v10h-3zM969 230h3v22h-3zM973 213h3v17h-3zM977 213h3v2h-3zM985 219h3v14h-3zM1001 228h3v5h-3zM1009 229h3v22h-3zM1021 214h3v24h-3zM1025 210h3v4h-3zM1041 214h3v16h-3zM1049 218h3v5h-3zM1057 219h3v11h-3zM1065 166h3v53h-3zM1073 143h3v28h-3zM1097 141h3v3h-3zM1105 139h3v9h-3z" fill="#000" stroke="none"/>
<path d="M673.5 350V352M675.5 350V352M681.5 349.5h2v23h-2zM685.5 371V372M687.5 371V372M689.5 370.5h2v47h-2zM693.5 418.5h2v5h-2zM697.5 424V426M699.5 424V426M701.5 413V424M703.5 413V424M705.5 413.5h2v8h-2zM709.5 420V422M711.5 420V422M713.5 419.5h2v14h-2zM717.5 413V432M719.5 413V432M721.5 411V413M723.5 411V413M725.5 401V410M727.5 401V410M729.5 383V401M731.5 383V401M733.5 376V383M735.5 376V383M737.5 375.5h2v6h-2zM741.5 382.5h2v6h-2zM745.5 380V388M747.5 380V388M749.5 377V380M751.5 377V380M753.5 376.5h2v2h-2zM757.5 301V378M759.5 301V378M761.5 296V300M763.5 296V300M765.5 295.5h2v13h-2zM769.5 301V309M771.5 301V309M773.5 301.5h2v7h-2zM777.5 276V308M779.5 276V308M781.5 274.5h2v1h-2zM785.5 274.5h2v14h-2zM789.5 289.5h2v6h-2zM793.5 270V288M795.5 270V288M797.5 266V270M799.5 266V270M801.5 266.5h2v29h-2zM805.5 290V295M807.5 290V295M809.5 290.5h2v16h-2zM813.5 305V307M815.5 305V307M817.5 303.5h2v5h-2zM821.5 302V309M823.5 302V309M829.5 298V301M831.5 298V301M833.5 298.5h2v11h-2zM837.5 310.5h2v3h-2zM841.5 316.5h2v0h-2zM849.5 312V316M851.5 312V316M853.5 299V311M855.5 299V311M857.5 300.5h2v25h-2zM861.5 326.5h2v24h-2zM865.5 351.5h2v3h-2zM873.5 353V354M875.5 353V354M877.5 334V351M879.5 334V351M881.5 314V333M883.5 314V333M885.5 314.5h2v13h-2zM889.5 308V334M891.5 308V334M893.5 308.5h2v6h-2zM897.5 314.5h2v14h-2zM901.5 315V328M903.5 315V328M905.5 316.5h2v5h-2zM909.5 321.5h2v10h-2zM913.5 315V321M915.5 315V321M917.5 316.5h2v2h-2zM921.5 320.5h2v37h-2zM925.5 341V358M927.5 341V358M929.5 324V340M931.5 324V340M933.5 324.5h2v8h-2zM945.5 320V331M947.5 320V331M953.5 262V319M955.5 262V319M957.5 262.5h2v4h-2zM961.5 261V283M963.5 261V283M965.5 251V261M967.5 251V261M969.5 230V252M971.5 230V252M973.5 213V230M975.5 213V230M977.5 213V215M979.5 213V215M981.5 214.5h2v18h-2zM985.5 219V233M987.5 219V233M989.5 219.5h2v3h-2zM993.5 222.5h2v4h-2zM997.5 227.5h2v5h-2zM1001.5 228V233M1003.5 228V233M1005.5 227.5h2v22h-2zM1009.5 229V251M1011.5 229V251M1017.5 229.5h2v8h-2zM1021.5 214V238M1023.5 214V238M1025.5 210V214M1027.5 210V214M1029.5 209.5h2v5h-2zM1037.5 221.5h2v8h-2zM1041.5 214V230M1043.5 214V230M1045.5 213.5h2v10h-2zM1049.5 218V223M1051.5 218V223M1053.5 217.5h2v22h-2zM1057.5 219V230M1059.5 219V230M1065.5 166V219M1067.5 166V219M1069.5 166.5h2v4h-2zM1073.5 143V171M1075.5 143V171M1089.5 144.5h2v1h-2zM1097.5 141V144M1099.5 141V144M1101.5 140.5h2v7h-2zM1105.5 139V148M1107.5 139V148M1109.5 138.5h2v1h-2z" stroke="#00ff00" fill="none"/>
<path d="M677 350.5h3M825 302.5h3M845 317.5h3M869 355.5h3M937 332.5h3M941 332.5h3M949 320.5h3M1013 230.5h3M1033 221.5h3M1061 218.5h3M1077 144.5h3M1081 144.5h3M1085 144.5h3M1093 145.5h3" stroke="#00ff00" fill="none"/>
<path d="M716.500 444.500L1242.500 262.500" stroke="#9966cc" stroke-width="5.600" shape-rendering="auto"/>
<path d="M1109 110h10l-5 5z" fill="#708090" shape-rendering="auto"/>
<path d="M674 506.500H1228" stroke="#c0c0c0" stroke-dasharray="2 2"/>
<g shape-rendering="auto" fill="none" stroke-linejoin="round">
<polyline points="674,529.100 680.600,529.100 686.600,532.200 691.800,541.700 697.800,552.800 703,553.300 708,548.500 712.400,546.800 717.500,546.800 722.700,543.400 730.400,533 738.200,522.800 743.300,517.600 747.600,516.700 751.900,514.500 755.400,513.800 758.800,503.800 762.200,495.300 765.700,482.400 770,476.700 775.100,475.500 779.400,473.800 788,467.800 794,468.600 800,466.900 804.300,466.900 807.800,469.800 812.900,477.200 819.800,484.600 825,485 829.300,484 834.400,486.700 842.200,495.300 849.900,500 854.200,500.400 861,506.400 866.200,515 874,523.600 876.500,523.600 880.800,520.200 884,515.900 887.750,511.200 901.800,510.600 914,512.100 922.400,512.500 929.900,516.800 938.400,511.200 947.750,509.300 952.400,504.600 959,489.600 966.500,477.400 970.250,476.500 975.900,467.100 981.500,462.100 985.250,462.100 992.750,466.200 1002.100,471.800 1007.750,476.900 1015.250,479.900 1022.750,480.600 1027.400,478 1034,478 1039.600,484.900 1050.900,486.250 1056.500,490.600 1062.100,493.750 1066.800,490.600 1072.400,479.300 1079,470.500 1090.250,470.500 1101.500,477.400 1110.900,478" stroke="#ff0000" stroke-width="2.100"/>
<polyline points="674,519.800 685.700,521.400 697.800,526.500 711.500,529.600 728.700,529.600 740.700,527 752.800,524.500 759.700,520.200 775.100,512.400 787.200,506.400 795.700,503.800 804.300,501.800 821.500,501.300 826.700,500.800 833.600,500.900 837,501.800 850.700,501.800 861,503.800 871.400,506.400 883.400,506.900 891.500,505.900 917.750,506.100 921.500,507.100 951.500,507.100 962.750,501.800 977.750,494.900 996.500,490.900 1015.250,489.600 1034,488.700 1049,490 1064,490.600 1075.250,486.800 1090.250,483.100 1101.500,481.750 1110.900,481.750" stroke="#008000" stroke-width="2.400"/>
<polyline points="674,509.300 682.300,509.300 694.300,511.600 714.100,513.300 727,512.100 740.700,509.300 754.500,506.900 768.200,501.800 782,495.300 795.700,491.500 806,491 818,491 830,493.900 842.200,497.800 854.200,501.300 864.500,506.400 873,509.900 883.400,512.100 891.500,513.600 908.400,512.100 925.250,511.200 936.500,508.750 949.600,507.400 962.750,503.100 977.750,498.400 996.500,496.600 1005.900,498.600 1019,499.600 1034,499.600 1045.250,500.500 1062.100,505.200 1079,505.200 1082.750,506.500 1099.600,506.500 1105.250,505.200 1110,505.200" stroke="#000" stroke-width="1.100"/>
</g>
<path d="M674 591.5H1228" stroke="#000" stroke-dasharray="18 6"/>
<path d="M674 635.5H1228" stroke="#000" stroke-dasharray="18 6"/>
<path d="M674 678.5H1228" stroke="#000" stroke-dasharray="18 6"/>
<g shape-rendering="auto" fill="none" stroke-linejoin="round">
<polyline points="674.400,696.600 679,696.600 682,703 686.500,694.600 690,693 694,699.400 698.200,699 702.600,689 706.700,695.400 710.300,693 714.700,699 718.300,682.900 722.400,679.900 726.400,664.800 730.400,646.600 734.500,640.200 738.500,646.600 742,653.700 745.600,634.600 749.600,612.800 753.600,614.400 755.600,590.200 758.200,562.400 761.700,563 765.700,581.200 769.700,574 773.800,581.200 778.800,563 782.800,563 789.900,581.200 794.900,563 798.500,564 801,582 803,596.300 806.600,587.200 810,606.300 814,611.400 818,617.400 822,608.400 827.200,608.400 830,607.400 834,618.400 838,627.500 842,686 846.200,682 854.200,640.600 858.300,663.800 862.300,695 866.300,703 870.300,699 874.400,691 878.400,666.800 882.400,639.600 886.500,647.700 890.500,612.400 893.500,618.400 898.600,647.700 902.600,620.500 906.600,634.600 910.600,649.700 914.700,607.400 917.700,612.400 922.700,683.300 926.800,648.700 930.400,614.400 934.800,635.600 938.900,630.500 942.900,618.400 946.900,597.300 950.500,603.300 953,578 957,573 959,579 965,566 969,563.600 974,567 979.200,571 982,587.200 986,576 994.100,585.200 1002.200,583.200 1006.200,605.300 1010.300,589.200 1014.300,590.200 1018.300,597.300 1022.300,575 1026.400,586.200 1030.400,595.300 1034.400,603.300 1038.500,636.600 1042.500,613.400 1046.500,638.600 1050.600,630.500 1054.600,686.500 1058.600,643.600 1062.200,642.600 1064.700,596.300 1066.700,570 1068.300,584.200 1070.700,607.400 1073.700,574 1078.800,572 1086.800,573 1090.900,583.200 1094.900,584.200 1098.500,579 1102.500,588.200 1107,576.500 1110,577.700" stroke="#ff0000" stroke-width="1.100"/>
<polyline points="674.400,700.700 679,701.500 682,705 690,699 694,701 698.200,702 702.600,696 706.700,700 710.300,698 714.700,701 718.300,691 722.400,685 726.400,678.900 730.400,668.800 734.500,660.800 738.500,665.800 742,670.800 745.600,664.800 749.600,660.800 753.600,661.800 755.600,646.600 758.200,606.300 761.700,607.400 765.700,610.400 769.700,607.400 773.800,608.400 776.800,592.200 779.800,585.200 788.900,585.200 790.900,590.200 792.900,580.200 795.900,568 799,578 802,590.200 806,586.200 810,599.300 814,598.300 818,601.300 822,597.300 827.200,595.300 830,592.200 834,602.300 842,608.400 848.200,605.300 854.200,594.700 858.300,618.400 862.300,634.600 866.300,637.600 872.400,636.600 878.400,618.400 882.400,608.400 886.500,613.400 890.500,603.300 894.500,608.400 898.600,615.400 902.600,608.400 906.600,614.400 910.600,620.500 914.700,608.400 917.700,611.400 922.700,638.600 926.800,628.500 930.400,615.400 934.800,625.500 938.900,630.500 942.900,629.500 946.900,618.400 950.500,620.500 953,586.200 955,574 960,575 965,566 969,563.600 974,568 979.200,572 982,587.200 986,576 994.100,585.200 998.200,587.200 1002.200,583.200 1006.200,601.300 1010.300,585.200 1014.300,585.200 1018.300,592.200 1022.300,572 1026.400,585.200 1030.400,590.200 1034.400,595.300 1038.500,602.300 1042.500,590.200 1046.500,596.300 1050.600,593.200 1054.600,608.400 1058.600,594.300 1062.200,593.200 1064.700,578 1066.700,568 1069.700,580 1073.700,573 1086.800,570 1098.500,572 1110,573" stroke="#1e90ff" stroke-width="1.100"/>
<polyline points="674.400,702 679,702.700 682,706 690,700 698.200,702.700 702.600,697 706.700,700.700 710.300,699 714.700,702 718.300,693 722.400,689 726.400,682.900 730.400,676.900 734.500,671.800 738.500,674.900 742,678.900 745.600,675.900 749.600,670.800 753.600,671.200 755.600,656.700 758.200,629.500 761.700,627.500 765.700,634.600 769.700,630.500 773.800,634.600 777.800,618.400 781.800,613.400 785.900,619.400 789.900,624.500 793.900,610.400 798,605.300 802,621.500 806,617.400 814,610.400 818,614.400 822,609.400 830,608.400 834,616.400 842,621.500 848.200,618.400 854.200,603.300 858.300,624.500 862.300,639.600 866.300,643.600 870.300,642.600 874.400,634.600 878.400,618.400 882.400,605.300 886.500,613.400 890.500,601.300 894.500,608.400 898.600,616.400 902.600,606.300 906.600,613.400 910.600,620.500 914.700,606.300 917.700,610.400 922.700,640.600 926.800,626.500 930.400,613.400 934.800,621.500 939.900,620 942.900,618.400 946.900,610.400 950.500,609.400 953,584.200 955,569 958,572 965,564.400 969,563 974,566 980,569 982,581 986,571 994.100,578 998.200,580 1002.200,576 1006.200,593.200 1010.300,578 1014.300,577 1018.300,581 1022.300,569 1026.400,580 1030.400,585.200 1036.500,591.200 1042.500,586.200 1046.500,592.200 1050.600,590.200 1054.600,604.300 1058.600,590.200 1062.200,590.200 1064.700,575 1066.700,565 1069.700,577 1073.700,567.700 1086.800,567 1089.900,572 1094.900,572.500 1098.500,570 1102.500,572 1107,569 1110,571" stroke="#9400d3" stroke-width="1.100"/>
<polyline points="674.400,618.400 678,618.400 682,623.500 686,623.500 690,635.600 698.200,635.600 702.200,634.200 710.300,635 714.300,637.600 718.300,633 724.400,631.500 732.500,625.500 736.500,624.900 740.500,626.500 748.600,624.900 754.600,624.500 758.200,606.800 761.700,606 765.700,608.400 769.700,607.400 773.800,608.400 777.800,602.300 781.800,599.900 786.900,604.300 790.900,604.300 794.900,599.300 799,599.300 803,605.300 807,605.300 811,608 819.100,608 825.200,606.800 831,606.300 838,609.400 850.200,609.400 854.200,606.800 858.300,612.400 863.300,618.800 874.400,618.800 878.400,614.400 882.400,609.400 886.500,613.400 890.500,609 894.500,610 898.600,612.800 902.600,611.400 906.600,620.500 910.600,630.500 915.700,630 918.700,632.500 922.700,644.600 929.800,645 933.800,657.700 941.900,657.700 946.900,652.300 950.500,651.700 954,627.500 959,628 963,625.500 967,620.500 971,611.400 975,605.300 978.200,605.300 982,612.800 986,608 990.100,609.400 996.200,612.400 1002.200,612.800 1006.200,620.500 1010.300,612.800 1014.300,612 1018.300,614.400 1022.300,605.300 1026.400,604 1030.400,606.300 1038.500,611.400 1042.500,606.800 1046.500,608.800 1050.600,608.400 1054.600,615.400 1058.600,608 1062.600,606.800 1064.700,594.300 1066.700,584.600 1070.700,585.800 1073.700,574 1080.800,574 1086.800,572.500 1090.900,573.700 1098.900,573 1102.500,574.500 1107,572 1110,572" stroke="#000" stroke-width="2.800"/>
</g>
<g fill="#000" font-size="10" shape-rendering="auto">
<path d="M1228 120.5h3" stroke="#000" shape-rendering="crispEdges"/>
<text x="1234" y="124" textLength="32.500" lengthAdjust="spacingAndGlyphs">0.90355</text>
<path d="M1228 153.5h3" stroke="#000" shape-rendering="crispEdges"/>
<text x="1234" y="157" textLength="32.500" lengthAdjust="spacingAndGlyphs">0.90175</text>
<path d="M1228 186.5h3" stroke="#000" shape-rendering="crispEdges"/>
<text x="1234" y="190" textLength="32.500" lengthAdjust="spacingAndGlyphs">0.89995</text>
<path d="M1228 219.5h3" stroke="#000" shape-rendering="crispEdges"/>
<text x="1234" y="223" textLength="32.500" lengthAdjust="spacingAndGlyphs">0.89810</text>
<path d="M1228 252.5h3" stroke="#000" shape-rendering="crispEdges"/>
<text x="1234" y="256" textLength="32.500" lengthAdjust="spacingAndGlyphs">0.89630</text>
<path d="M1228 285.5h3" stroke="#000" shape-rendering="crispEdges"/>
<text x="1234" y="289" textLength="32.500" lengthAdjust="spacingAndGlyphs">0.89445</text>
<path d="M1228 318.5h3" stroke="#000" shape-rendering="crispEdges"/>
<text x="1234" y="322" textLength="32.500" lengthAdjust="spacingAndGlyphs">0.89265</text>
<path d="M1228 351.5h3" stroke="#000" shape-rendering="crispEdges"/>
<text x="1234" y="355" textLength="32.500" lengthAdjust="spacingAndGlyphs">0.89080</text>
<path d="M1228 384.5h3" stroke="#000" shape-rendering="crispEdges"/>
<text x="1234" y="388" textLength="32.500" lengthAdjust="spacingAndGlyphs">0.88900</text>
<path d="M1228 417.5h3" stroke="#000" shape-rendering="crispEdges"/>
<text x="1234" y="421" textLength="32.500" lengthAdjust="spacingAndGlyphs">0.88715</text>
<path d="M1228 450.5h3" stroke="#000" shape-rendering="crispEdges"/>
<text x="1234" y="454" textLength="32.500" lengthAdjust="spacingAndGlyphs">0.88535</text>
<rect x="1230" y="134" width="38" height="12" fill="#000"/><text x="1234" y="144" textLength="32.500" lengthAdjust="spacingAndGlyphs" fill="#fff">0.90247</text>
<path d="M1228 463.5h3" stroke="#000" shape-rendering="crispEdges"/>
<text x="1231.5" y="467" textLength="37" lengthAdjust="spacingAndGlyphs">0.005525</text>
<path d="M1228 505.5h3" stroke="#000" shape-rendering="crispEdges"/>
<text x="1231.5" y="509.500" textLength="19" lengthAdjust="spacingAndGlyphs">0.00</text>
<path d="M1228 552.5h3" stroke="#000" shape-rendering="crispEdges"/>
<text x="1231" y="556" textLength="35.5" lengthAdjust="spacingAndGlyphs">-0.00588</text>
<path d="M1228 568.5h3" stroke="#000" shape-rendering="crispEdges"/>
<text x="1231.5" y="572" textLength="5" lengthAdjust="spacingAndGlyphs">0</text>
<path d="M1228 590.5h3" stroke="#000" shape-rendering="crispEdges"/>
<text x="1231" y="594.500" textLength="14" lengthAdjust="spacingAndGlyphs">-20</text>
<path d="M1228 634.5h3" stroke="#000" shape-rendering="crispEdges"/>
<text x="1231" y="638.500" textLength="14" lengthAdjust="spacingAndGlyphs">-50</text>
<path d="M1228 677.5h3" stroke="#000" shape-rendering="crispEdges"/>
<text x="1231" y="681.500" textLength="14" lengthAdjust="spacingAndGlyphs">-80</text>
<path d="M1228 701.5h3" stroke="#000" shape-rendering="crispEdges"/>
<text x="1231" y="705" textLength="19" lengthAdjust="spacingAndGlyphs">-100</text>
<path d="M677 115.500h7l-3.500 4z" fill="#000"/>
<text x="689" y="121.500" textLength="54" lengthAdjust="spacingAndGlyphs">USDCHF,H4</text><text x="750.200" y="121.500" textLength="141" lengthAdjust="spacingAndGlyphs">0.90259 0.90287 0.90245 0.90247</text>
<text x="678.500" y="468" textLength="80" lengthAdjust="spacingAndGlyphs">AO_Zotik 0.003116</text>
<text x="678.500" y="574" textLength="156" lengthAdjust="spacingAndGlyphs">WPR_VSmark(21|55|77|277) -6.6111</text>
<path d="M674.5 709v3" stroke="#000" shape-rendering="crispEdges"/>
<text x="673" y="721.500" textLength="49" lengthAdjust="spacingAndGlyphs">30 Jun 2014</text>
<path d="M738.5 709v3" stroke="#000" shape-rendering="crispEdges"/>
<text x="737" y="721.500" textLength="46" lengthAdjust="spacingAndGlyphs">2 Jul 16:00</text>
<path d="M802.5 709v3" stroke="#000" shape-rendering="crispEdges"/>
<text x="801" y="721.500" textLength="46" lengthAdjust="spacingAndGlyphs">7 Jul 08:00</text>
<path d="M866.5 709v3" stroke="#000" shape-rendering="crispEdges"/>
<text x="865" y="721.500" textLength="51" lengthAdjust="spacingAndGlyphs">10 Jul 00:00</text>
<path d="M930.5 709v3" stroke="#000" shape-rendering="crispEdges"/>
<text x="929" y="721.500" textLength="51" lengthAdjust="spacingAndGlyphs">14 Jul 16:00</text>
<path d="M994.5 709v3" stroke="#000" shape-rendering="crispEdges"/>
<text x="993" y="721.500" textLength="51" lengthAdjust="spacingAndGlyphs">17 Jul 08:00</text>
<path d="M1058.5 709v3" stroke="#000" shape-rendering="crispEdges"/>
<text x="1057" y="721.500" textLength="51" lengthAdjust="spacingAndGlyphs">22 Jul 00:00</text>
</g>
</svg>
<div id="tabs"><div class="act"></div><i style="left:1px"></i><i style="left:84px"></i><i style="left:164px"></i><i style="left:248px"></i><i style="left:328px"></i><i style="left:416px"></i><i style="left:496px"></i><i style="left:584px"></i><i style="left:664px"></i><i style="left:920px"></i><i style="left:1000px"></i><i style="left:1084px"></i><i style="left:1164px"></i><span style="left:14.1px;letter-spacing:-1.511px">EURUSD,M5</span><span style="left:94px;letter-spacing:-1.382px">EURUSD,H1</span><span style="left:173.3px;letter-spacing:-1.562px">GBPUSD,M15</span><span style="left:259.3px;letter-spacing:-1.545px">GBPUSD,H4</span><span style="left:338.6px;letter-spacing:-1.384px">AUDUSD,M15</span><span style="left:426.7px;letter-spacing:-1.345px">AUDUSD,H1</span><span style="left:507.3px;letter-spacing:-1.299px">NZDUSD,M15</span><span style="left:594px;letter-spacing:-1.271px">NZDUSD,H1</span><span style="left:675.2px;letter-spacing:-1.151px">USDCHF,M15</span><span style="left:762px;letter-spacing:-1.143px;color:#000">USDCHF,H4</span><span style="left:842.5px;letter-spacing:-1.373px">USDCAD,M15</span><span style="left:930px;letter-spacing:-1.27px">USDCAD,H4</span><span style="left:1008.9px;letter-spacing:-1.312px">EURGBP,M15</span><span style="left:1095.2px;letter-spacing:-1.364px">EURGBP,H1</span><span style="left:1173.8px;letter-spacing:-1.165px">USDJPY,M15</span><svg class="ic" style="left:1246px;top:4px" width="30" height="12"><path d="M10 2.500v7l-4-3.500z" fill="#8e8e8e"/><path d="M22 1.500v9l5-4.500z" fill="#000"/></svg></div>
</div></body></html>
